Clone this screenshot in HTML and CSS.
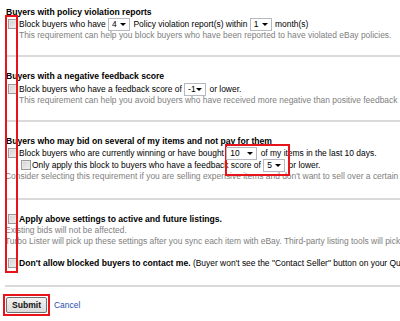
FILE: index.html
```html
<!DOCTYPE html>
<html lang="en">
<head>
    <meta charset="UTF-8">
    <title>Buyer requirements</title>
    <link rel="stylesheet" href="styles.css">
</head>
<body>
    <div class="page">
        <!-- highlight frames drawn over the form -->
        <div class="frame frame-checks"></div>
        <div class="frame frame-qty"></div>

        <div class="group first">
            <div class="title">Buyers with policy violation reports</div>
            <div class="row"><span class="check"></span>Block buyers who have <span class="pick">4</span> Policy violation report(s) within <span class="pick">1</span> month(s)</div>
            <div class="note indent">This requirement can help you block buyers who have been reported to have violated eBay policies.</div>
        </div>

        <div class="group">
            <div class="title">Buyers with a negative feedback score</div>
            <div class="row spaced"><span class="check"></span>Block buyers who have a feedback score of <span class="pick">-1</span> or lower.</div>
            <div class="note indent">This requirement can help you avoid buyers who have received more negative than positive feedback from other members.</div>
        </div>

        <div class="group tall">
            <div class="title">Buyers who may bid on several of my items and not pay for them</div>
            <div class="row"><span class="check"></span>Block buyers who are currently winning or have bought <span class="pick wide">10</span> of my items in the last 10 days.</div>
            <div class="row sub"><span class="check"></span>Only apply this block to buyers who have a feedback score of <span class="pick">5</span> or lower.</div>
            <div class="note">Consider selecting this requirement if you are selling expensive items and don't want to sell over a certain number of items to one buyer.</div>
        </div>

        <div class="group tall">
            <div class="row"><span class="check"></span><b>Apply above settings to active and future listings.</b></div>
            <div class="note">Existing bids will not be affected.</div>
            <div class="note">Turbo Lister will pick up these settings after you sync each item with eBay. Third-party listing tools will pick up these settings as well.</div>
            <div class="row gap"><span class="check"></span><b>Don't allow blocked buyers to contact me.</b> (Buyer won't see the "Contact Seller" button on your Questions and Answers page.)</div>
        </div>

        <div class="actions">
            <span class="submit-wrap"><button class="submit" type="button">Submit</button></span>
            <a href="#" class="cancel">Cancel</a>
        </div>
    </div>
</body>
</html>
```

FILE: styles.css
```css
html, body {
    margin: 0;
    padding: 0;
    background-color: #fff;
    overflow: hidden;
}

.page {
    position: relative;
    width: 400px;
    height: 321px;
    overflow: hidden;
    font-family: "Liberation Sans", Arial, sans-serif;
    font-size: 8.45px;
    color: #000;
    white-space: nowrap;
}

/* Sections */
.group {
    margin-left: 5px;
    padding: 13px 0 14px;
    border-bottom: 2px solid #dadada;
}

.group.first {
    padding-top: 6px;
}

.group.tall {
    padding-bottom: 16px;
}

.title {
    margin-left: 1px;
    height: 12px;
    line-height: 12px;
    font-size: 8.6px;
    font-weight: bold;
}

.row b {
    font-size: 8.6px;
}

.row {
    height: 12px;
    line-height: 12px;
    padding-left: 3px;
}

.row.spaced {
    margin-top: 1px;
}

.row.sub {
    padding-left: 16px;
}

.row.gap {
    margin-top: 10px;
}

.note {
    height: 11px;
    line-height: 11px;
    color: #808080;
}

.note.indent {
    padding-left: 14px;
}

/* Fake form controls */
.check {
    display: inline-block;
    box-sizing: border-box;
    width: 10px;
    height: 10px;
    margin-right: 1px;
    vertical-align: -2px;
    border: 1px solid #9a9a9a;
    background: linear-gradient(135deg, #cfcfcf, #f4f4f4);
    box-shadow: inset 0 0 0 1px #e8e8e8;
}

.pick {
    display: inline-block;
    box-sizing: border-box;
    width: 22px;
    height: 13px;
    line-height: 11px;
    margin: 0 1px 0 0;
    padding: 0 0 0 3px;
    vertical-align: middle;
    position: relative;
    border: 1px solid #b5b9bf;
    background-color: #fff;
}

.pick.wide {
    width: 31px;
}

.pick::after {
    content: "";
    position: absolute;
    right: 3px;
    top: 4px;
    border-left: 3px solid transparent;
    border-right: 3px solid transparent;
    border-top: 3px solid #000;
}

/* Buttons */
.actions {
    padding: 7px 0 0 3px;
    display: flex;
    align-items: center;
}

.submit-wrap {
    display: inline-block;
    padding: 1px;
    border: 2px solid #e8141c;
}

.submit {
    display: block;
    box-sizing: border-box;
    width: 41px;
    height: 16px;
    padding: 0;
    font-family: "Liberation Sans", Arial, sans-serif;
    font-size: 8.6px;
    font-weight: bold;
    color: #111;
    border: 1px solid #707070;
    border-radius: 2px;
    background: linear-gradient(#f2f2f2, #dcdcdc);
}

.cancel {
    margin-left: 4px;
    color: #1f4fb4;
    text-decoration: none;
}

/* Highlight frames */
.frame {
    position: absolute;
    box-sizing: border-box;
    border: 2px solid #e8141c;
}

.frame-checks {
    left: 5px;
    top: 15px;
    width: 13px;
    height: 258px;
}

.frame-qty {
    left: 225px;
    top: 144px;
    width: 65px;
    height: 32px;
}
```
